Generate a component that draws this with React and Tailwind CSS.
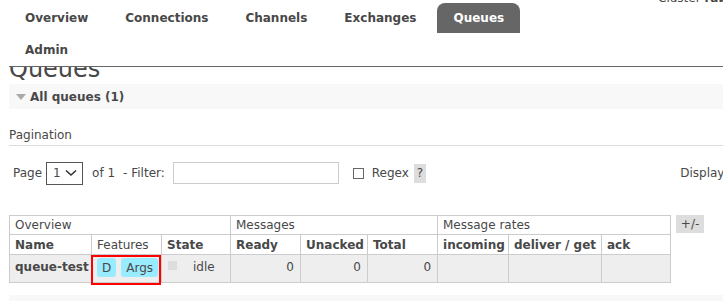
export default function App() {
  const tabs = ["Overview", "Connections", "Channels", "Exchanges", "Queues", "Admin"];
  const cols = [82, 70, 69, 70, 67, 70, 71, 93, 69];

  return (
    <div className="w-[723px] h-[301px] overflow-hidden bg-white text-[#484848]" style={{ fontFamily: '"DejaVu Sans", Verdana, sans-serif' }}>
      {/* header */}
      <div className="relative z-10 bg-white border-b border-[#666] ml-[9px] w-[800px] h-[67px]">
        <div className="absolute left-[649px] top-[-11px] text-[12px] whitespace-nowrap">
          Cluster <b>rabbit@localhost</b>
        </div>
        <ul className="flex flex-wrap w-[560px] pt-[3px]">
          {tabs.map((t) => (
            <li
              key={t}
              className={
                "h-[30px] px-[16px] mr-[5px] mb-[2px] flex items-center text-[12px] font-bold rounded-t-[8px] " +
                (t === "Queues" ? "bg-[#666] text-white" : "text-[#484848]")
              }
            >
              {t}
            </li>
          ))}
        </ul>
      </div>

      <div className="pl-[9px] w-[800px]">
        <h1 className="text-[24px] leading-[28px] mt-[-12px] text-[#484848] font-normal">Queues</h1>

        <div className="h-[25px] bg-[#f8f8f8] flex items-center pl-[7px] mt-[1px]">
          <svg width="10" height="6" viewBox="0 0 10 6" className="mr-[4px]">
            <path d="M0 0 H10 L5 6 Z" fill="#aaa" />
          </svg>
          <span className="text-[12px] font-bold">All queues (1)</span>
        </div>

        <div className="mt-[19px] w-[714px] border-b border-[#ddd] pb-[3px] text-[12px] leading-[14px] text-[#484848]">
          Pagination
        </div>

        <div className="flex items-center h-[24px] mt-[15px] pl-[4px] text-[12px] w-[800px]">
          <span>Page</span>
          <div className="ml-[4px] w-[37px] h-[23px] border border-[#555] flex items-center pl-[6px]">
            <span>1</span>
            <svg className="ml-[4px]" width="12" height="8" viewBox="0 0 12 8">
              <path d="M1 1.5 L6 6 L11 1.5" fill="none" stroke="#333" strokeWidth="1.6" />
            </svg>
          </div>
          <span className="ml-[9px]">of 1</span>
          <span className="ml-[8px]">- Filter:</span>
          <div className="ml-[8px] w-[166px] h-[22px] border border-[#ccc]"></div>
          <div className="ml-[14px] w-[11px] h-[11px] border border-[#666]"></div>
          <span className="ml-[8px]">Regex</span>
          <span className="ml-[5px] bg-[#ddd] px-[3px] h-[19px] flex items-center">?</span>
          <span className="ml-[254px] whitespace-nowrap">Displaying 1 item</span>
        </div>

        <div className="flex items-start mt-[30px]">
          <table className="table-fixed border-collapse text-[12px] w-[662px]">
            <colgroup>
              {cols.map((w, i) => (
                <col key={i} style={{ width: w }} />
              ))}
            </colgroup>
            <thead>
              <tr className="h-[19px]">
                <th colSpan={3} className="border border-[#ccc] font-normal text-left px-[5px] leading-[14px]">Overview</th>
                <th colSpan={3} className="border border-[#ccc] font-normal text-left px-[5px] leading-[14px]">Messages</th>
                <th colSpan={3} className="border border-[#ccc] font-normal text-left px-[5px] leading-[14px]">Message rates</th>
              </tr>
              <tr className="h-[20px]">
                <th className="border border-[#ccc] text-left px-[5px] font-bold">Name</th>
                <th className="border border-[#ccc] text-left px-[5px] font-normal">Features</th>
                <th className="border border-[#ccc] text-left px-[5px] font-bold">State</th>
                <th className="border border-[#ccc] text-left px-[5px] font-bold">Ready</th>
                <th className="border border-[#ccc] text-left px-[5px] font-bold">Unacked</th>
                <th className="border border-[#ccc] text-left px-[5px] font-bold">Total</th>
                <th className="border border-[#ccc] text-left px-[5px] font-bold">incoming</th>
                <th className="border border-[#ccc] text-left px-[5px] font-bold whitespace-nowrap">deliver / get</th>
                <th className="border border-[#ccc] text-left px-[5px] font-bold">ack</th>
              </tr>
            </thead>
            <tbody>
              <tr className="h-[28px] bg-[#eee] align-top">
                <td className="border border-[#ccc] px-[5px] pt-[3px] font-bold whitespace-nowrap">queue-test</td>
                <td className="border border-[#ccc] p-0 relative">
                  <div className="absolute left-[-1px] top-0 w-[70px] h-[30px] border-2 border-[#f00]"></div>
                  <div className="flex gap-[5px] pl-[5px] pt-[3px]">
                    <span className="bg-[#99ebff] rounded-[3px] px-[5px] h-[19px] flex items-center">D</span>
                    <span className="bg-[#99ebff] rounded-[3px] px-[5px] h-[19px] flex items-center">Args</span>
                  </div>
                </td>
                <td className="border border-[#ccc] px-[6px] pt-[5px]">
                  <div className="flex items-start">
                    <span className="w-[9px] h-[9px] bg-[#ddd] mt-[1px]"></span>
                    <span className="ml-[16px] mt-[-2px]">idle</span>
                  </div>
                </td>
                <td className="border border-[#ccc] px-[6px] pt-[3px] text-right">0</td>
                <td className="border border-[#ccc] px-[6px] pt-[3px] text-right">0</td>
                <td className="border border-[#ccc] px-[6px] pt-[3px] text-right">0</td>
                <td className="border border-[#ccc]"></td>
                <td className="border border-[#ccc]"></td>
                <td className="border border-[#ccc]"></td>
              </tr>
            </tbody>
          </table>
          <div className="ml-[5px] bg-[#ddd] w-[28px] h-[18px] flex items-center justify-center text-[12px]">+/-</div>
        </div>

        <div className="mt-[12px] h-[25px] bg-[#f8f8f8]"></div>
      </div>
    </div>
  );
}
